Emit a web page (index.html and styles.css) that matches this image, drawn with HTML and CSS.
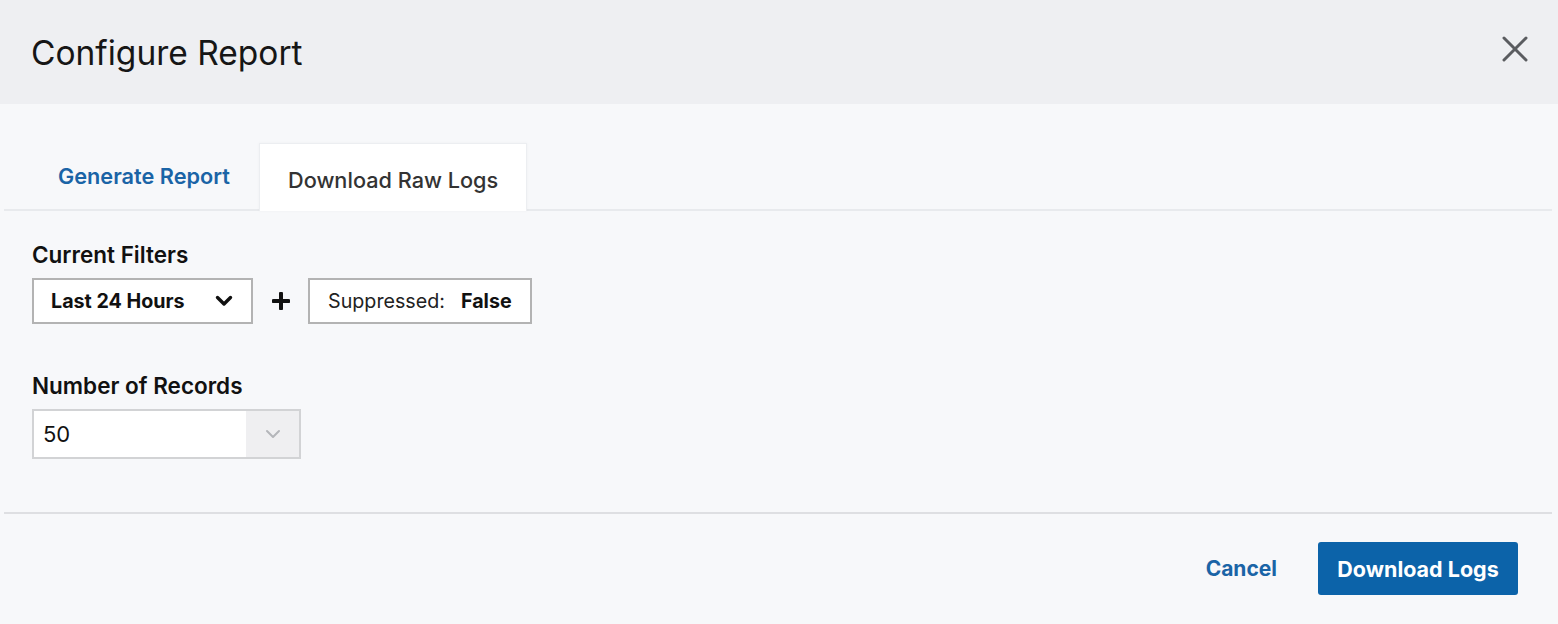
FILE: index.html
```html
<!DOCTYPE html>
<html>
<head>
<meta charset="utf-8">
<link rel="stylesheet" href="styles.css">
</head>
<body>
<div class="modal">
  <header class="modal-header">
    <h1 class="title">Configure Report</h1>
    <button class="close" aria-label="Close">
      <svg width="26" height="26" viewBox="0 0 26 26"><path d="M2 2 L24 24 M24 2 L2 24" stroke="#5a5c60" stroke-width="3" stroke-linecap="round"/></svg>
    </button>
  </header>
  <div class="modal-body">
    <div class="tabs">
      <div class="tab">Generate Report</div>
      <div class="tab active">Download Raw Logs</div>
    </div>
    <div class="content">
      <div class="field-label">Current Filters</div>
      <div class="filters">
        <div class="filter-box time">
          <span class="strong">Last 24 Hours</span>
          <svg class="chev" width="18" height="12" viewBox="0 0 18 12"><path d="M2.5 2.5 L9 9 L15.5 2.5" fill="none" stroke="#111" stroke-width="3.4" stroke-linecap="round" stroke-linejoin="round"/></svg>
        </div>
        <svg class="plus" width="18" height="18" viewBox="0 0 18 18"><path d="M9 1.5 V16.5 M1.5 9 H16.5" stroke="#111" stroke-width="4" stroke-linecap="round"/></svg>
        <div class="filter-box">
          <span class="light">Suppressed:</span><span class="strong">False</span>
        </div>
      </div>
      <div class="field-label second">Number of Records</div>
      <div class="select">
        <span class="select-value">50</span>
        <span class="select-arrow">
          <svg width="16" height="10" viewBox="0 0 16 10"><path d="M2 2 L8 8 L14 2" fill="none" stroke="#b4b6ba" stroke-width="2" stroke-linecap="round" stroke-linejoin="round"/></svg>
        </span>
      </div>
    </div>
    <div class="footer">
      <button class="btn-link">Cancel</button>
      <button class="btn-primary">Download Logs</button>
    </div>
  </div>
</div>
</body>
</html>
```
FILE: styles.css
```css
html, body {
  margin: 0;
  padding: 0;
}
body {
  width: 1558px;
  height: 624px;
  overflow: hidden;
  background: #f7f8fa;
  font-family: "Inter", "Lato", sans-serif;
  color: #111;
}
.modal {
  display: flex;
  flex-direction: column;
  height: 624px;
}
.modal-header {
  height: 104px;
  background: #eeeff2;
  display: flex;
  align-items: center;
  justify-content: space-between;
  padding: 0 30px 0 31px;
  box-sizing: border-box;
}
.title {
  margin: 0;
  font-size: 33.5px;
  font-weight: 400;
  color: #161616;
  line-height: 40px;
  position: relative;
  top: 1px;
}
.close {
  border: 0;
  background: none;
  padding: 0;
  width: 26px;
  height: 26px;
  cursor: pointer;
  position: relative;
  top: -3px;
}
.close svg { display: block; }
.modal-body {
  flex: 1;
  display: flex;
  flex-direction: column;
  padding: 39px 6px 0 4px;
}
.tabs {
  display: flex;
  align-items: stretch;
  height: 68px;
  border-bottom: 2px solid #e8eaed;
  box-sizing: border-box;
}
.tab {
  display: flex;
  align-items: center;
  padding: 0 10px 0 54px;
  font-size: 21.7px;
  font-weight: 600;
  color: #1a64a6;
  width: 255px;
  box-sizing: border-box;
  white-space: nowrap;
}
.tab.active {
  width: 268px;
  padding: 4px 0 0 28px;
  background: #fff;
  color: #333;
  font-weight: 500;
  border: 1px solid #eceef1;
  border-bottom: 0;
  margin-bottom: -2px;
  box-shadow: 0 0 3px rgba(0,0,0,0.04);
}
.content {
  padding: 31px 28px 0;
  height: 301px;
  box-sizing: border-box;
}
.field-label {
  font-size: 22.5px;
  font-weight: 600;
  color: #111;
  line-height: 26px;
}
.field-label.second {
  margin-top: 49px;
}
.filters {
  display: flex;
  align-items: center;
  margin-top: 10px;
}
.filter-box {
  height: 46px;
  box-sizing: border-box;
  border: 2px solid #b3b3b3;
  background: #fff;
  display: flex;
  align-items: center;
  padding: 0 18px;
  font-size: 19.7px;
  white-space: nowrap;
}
.filter-box.time {
  width: 221px;
  justify-content: space-between;
  padding: 0 18px 0 17px;
}
.strong { font-weight: 700; color: #111; }
.light { font-weight: 400; color: #222; margin-right: 16px; }
.chev { display: block; }
.plus { margin: 0 18px 0 19px; display: block; }
.select {
  margin-top: 10px;
  width: 269px;
  height: 50px;
  box-sizing: border-box;
  border: 2px solid #d2d3d5;
  background: #fff;
  display: flex;
  align-items: stretch;
}
.select-value {
  flex: 1;
  display: flex;
  align-items: center;
  padding-left: 9px;
  font-size: 22px;
  color: #111;
}
.select-arrow {
  width: 53px;
  background: #efeff1;
  display: flex;
  align-items: center;
  justify-content: center;
}
.footer {
  border-top: 2px solid #dedfe2;
  display: flex;
  justify-content: flex-end;
  align-items: center;
  padding: 28px 34px 0 0;
}
.btn-link {
  border: 0;
  background: none;
  font-family: inherit;
  font-size: 21px;
  font-weight: 700;
  color: #1a64a6;
  padding: 0;
  margin-right: 41px;
  cursor: pointer;
}
.btn-primary {
  border: 0;
  width: 200px;
  height: 53px;
  border-radius: 3px;
  background: #0c63a9;
  color: #fff;
  font-family: inherit;
  font-size: 21.5px;
  font-weight: 700;
  cursor: pointer;
}
```
